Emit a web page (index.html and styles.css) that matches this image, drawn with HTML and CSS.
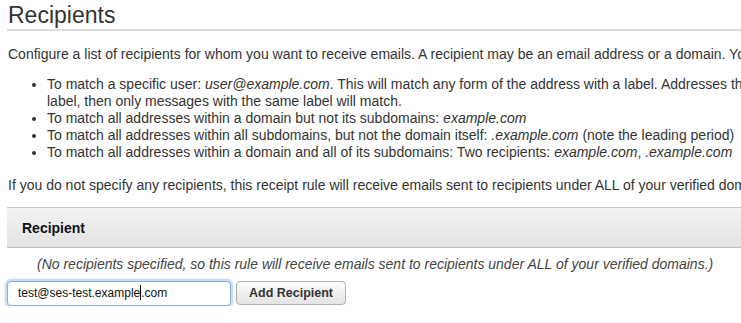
FILE: index.html
```html
<!DOCTYPE html>
<html lang="en">
<head>
<meta charset="utf-8">
<title>Recipients</title>
<link rel="stylesheet" href="styles.css">
</head>
<body>
<div class="page">
  <h2 class="title">Recipients</h2>
  <p class="text intro first">Configure a list of recipients for whom you want to receive emails. A recipient may be an email address or a domain. You can specify up to 100 recipients.</p>
  <ul class="rules">
    <li>To match a specific user: <em>user@example.com</em>. This will match any form of the address with a label. Addresses that include a label, then only messages with the same label will match.</li>
    <li>To match all addresses within a domain but not its subdomains: <em>example.com</em></li>
    <li>To match all addresses within all subdomains, but not the domain itself: <em>.example.com</em> (note the leading period)</li>
    <li>To match all addresses within a domain and all of its subdomains: Two recipients: <em>example.com</em>, <em>.example.com</em></li>
  </ul>
  <p class="text intro">If you do not specify any recipients, this receipt rule will receive emails sent to recipients under ALL of your verified domains.</p>
  <div class="table">
    <div class="table-head">Recipient</div>
    <div class="table-empty">(No recipients specified, so this rule will receive emails sent to recipients under ALL of your verified domains.)</div>
  </div>
  <div class="add-row">
    <div class="field">test@ses-test.example<span class="caret"></span>.com</div>
    <button class="btn" type="button">Add Recipient</button>
  </div>
</div>
</body>
</html>
```
FILE: styles.css
```css
html, body {
  margin: 0;
  padding: 0;
  background: #fff;
  overflow: hidden;
}
body {
  font-family: "Liberation Sans", Arial, Helvetica, sans-serif;
  font-size: 14px;
  line-height: 17px;
  color: #333;
}
.page {
  width: 840px;
  padding-left: 7px;
}
.title {
  margin: 0;
  padding: 1px 0 0 1px;
  font-size: 23px;
  line-height: 28px;
  font-weight: normal;
  color: #333;
  border-bottom: 2px solid #ddd;
}
.text {
  margin: 13px 0 13px 1px;
}
.first {
  margin-top: 15px;
}
.intro {
  white-space: nowrap;
}
.rules {
  margin: 13px 0 16px;
  padding-left: 40px;
}
.table {
  margin-top: 11px;
}
.table-head {
  height: 39px;
  line-height: 40px;
  padding-left: 15px;
  font-weight: bold;
  color: #111;
  border-top: 1px solid #c8c8c8;
  border-bottom: 1px solid #bdbdbd;
  background: linear-gradient(#f3f3f3, #e3e3e3);
  width: 1000px;
}
.table-empty {
  padding: 8px 0 4px 30px;
  font-style: italic;
  color: #444;
  white-space: nowrap;
}
.add-row {
  display: flex;
  align-items: flex-start;
  gap: 5px;
  margin-top: 4px;
}
.field {
  box-sizing: border-box;
  width: 224px;
  height: 25px;
  padding: 0 10px;
  font-size: 12px;
  line-height: 23px;
  color: #111;
  border: 1px solid #7fb0e6;
  border-radius: 4px;
  box-shadow: 0 0 0 2px #c9def6, 0 0 3px 2px #d7e7fa;
  background: #fff;
}
.caret {
  display: inline-block;
  width: 1px;
  height: 15px;
  background: #000;
  vertical-align: -3px;
}
.btn {
  box-sizing: border-box;
  width: 110px;
  height: 24px;
  padding: 0;
  font-family: "Liberation Sans", Arial, Helvetica, sans-serif;
  font-size: 12.5px;
  font-weight: bold;
  color: #333;
  border: 1px solid #b0b0b0;
  border-radius: 4px;
  background: linear-gradient(#fbfbfb, #e4e4e4);
}
```
